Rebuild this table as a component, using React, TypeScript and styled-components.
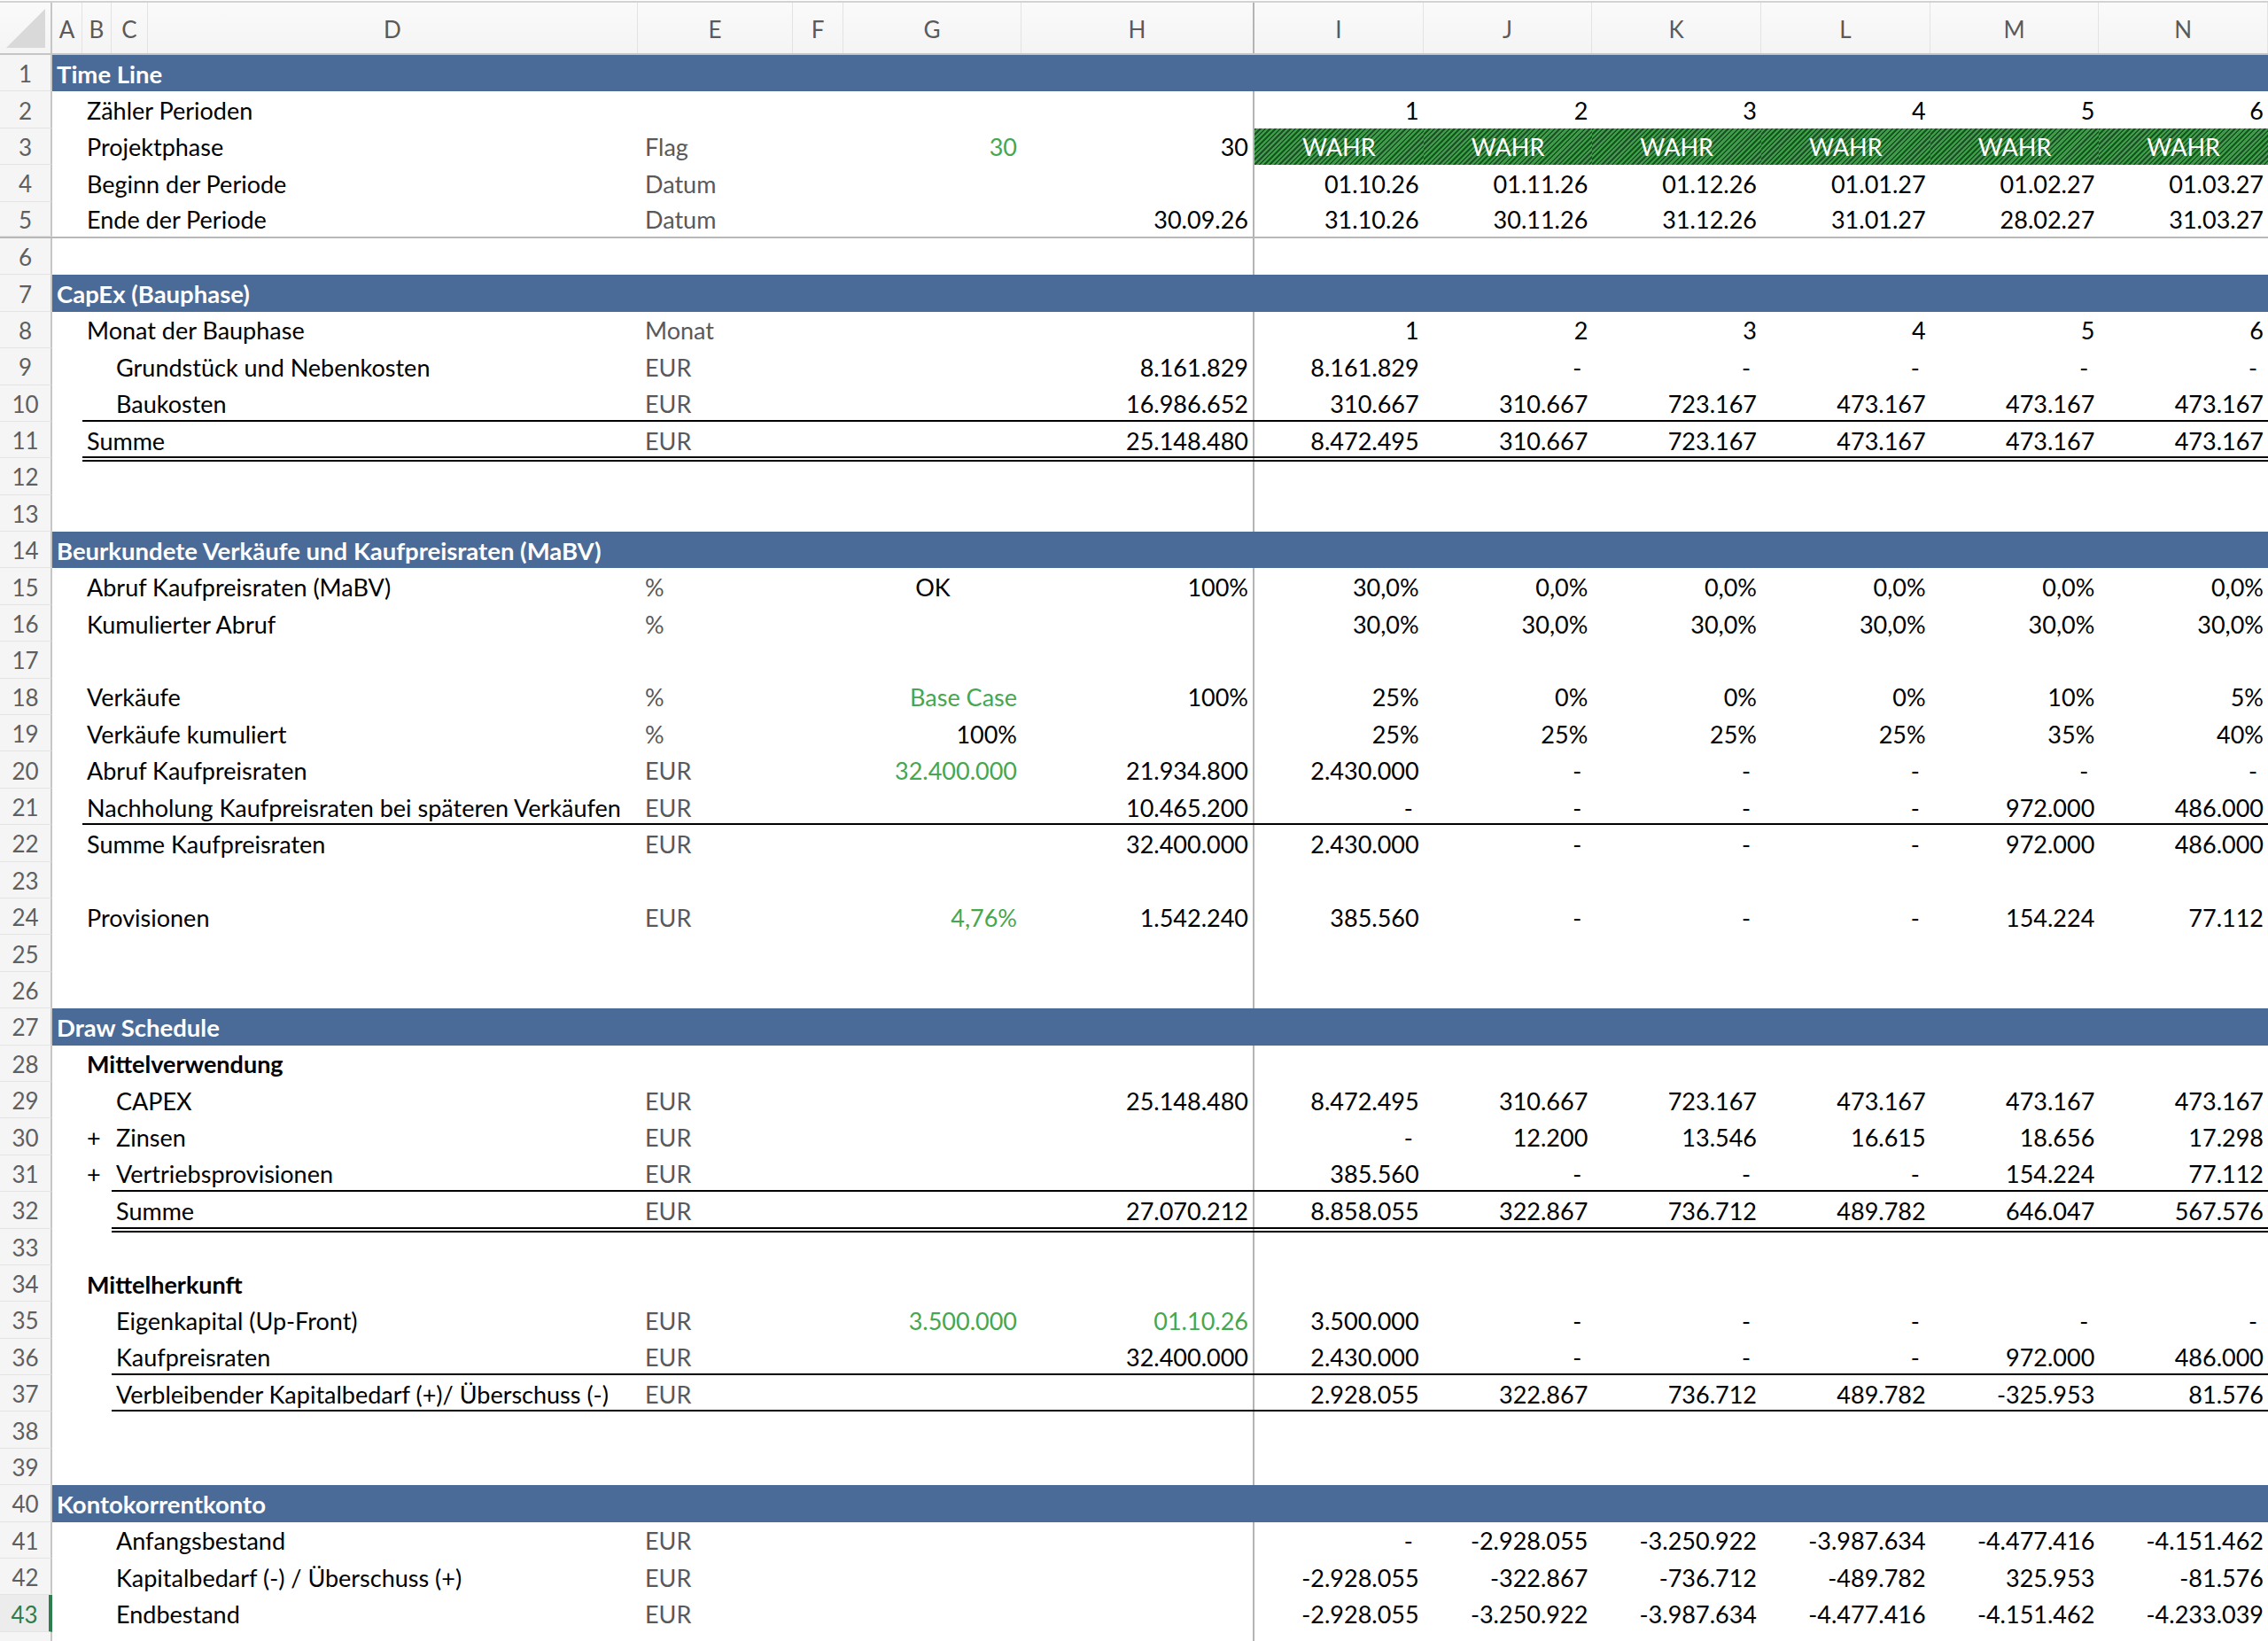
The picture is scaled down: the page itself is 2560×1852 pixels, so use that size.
import React from "react";
import styled, { createGlobalStyle, css } from "styled-components";

const GlobalStyle = createGlobalStyle`
  html, body {
    margin: 0;
    padding: 0;
    background: #ffffff;
  }
  body {
    font-family: Lato, "Liberation Sans", sans-serif;
    overflow: hidden;
  }
`;

const LETTERS = ["A", "B", "C", "D", "E", "F", "G", "H", "I", "J", "K", "L", "M", "N"];
const GRID = "59px 34px 33px 41px 553px 175px 57px 201px 263px repeat(6, 1fr)";
const ROW_H = 41.4;
const col = (letter: string) => LETTERS.indexOf(letter) + 2;

const Sheet = styled.div`
  width: 2560px;
  height: 1852px;
  overflow: hidden;
  display: flex;
  flex-direction: column;
  padding-top: 1px;
  box-sizing: border-box;
  font-size: 27px;
`;

const HeaderRow = styled.div`
  display: grid;
  grid-template-columns: ${GRID};
  height: 61px;
  flex: none;
  box-sizing: border-box;
  border-top: 2px solid #d2d2d2;
  border-bottom: 2px solid #c6c6c6;
  background: linear-gradient(#fafafa, #f4f4f4);
  font-size: 26px;
`;

const Corner = styled.div`
  display: flex;
  align-items: flex-end;
  justify-content: flex-end;
  padding: 0 6px 6px 0;
  border-right: 2px solid #c6c6c6;
`;

const ColLabel = styled.div<{ $freeze?: boolean }>`
  display: flex;
  align-items: center;
  justify-content: center;
  color: #5a5a5a;
  border-right: ${(p) => (p.$freeze ? "2px solid #b4b4b4" : "1.5px solid #e3e3e3")};
  padding-top: 2px;
`;

const Row = styled.div<{ $freeze?: boolean }>`
  display: grid;
  grid-template-columns: ${GRID};
  height: ${ROW_H}px;
  flex: none;
  box-sizing: border-box;
  ${(p) =>
    p.$freeze &&
    css`
      border-bottom: 2px solid #b8b8b8;
    `}
`;

const RowNum = styled.div<{ $active?: boolean }>`
  grid-row: 1;
  grid-column: 1;
  display: flex;
  align-items: center;
  justify-content: center;
  padding-top: 2px;
  font-size: 26px;
  background: ${(p) => (p.$active ? "#ececec" : "#f5f5f5")};
  color: ${(p) => (p.$active ? "#2e7d4c" : "#5f5f5f")};
  border-bottom: 1.5px solid #e4e4e4;
  border-right: ${(p) => (p.$active ? "4px solid #2e7d4c" : "2px solid #c6c6c6")};
  box-sizing: border-box;
`;

type Tone = "ink" | "unit" | "input";
const toneColor: Record<Tone, string> = {
  ink: "#000000",
  unit: "#595959",
  input: "#45a74f",
};

const Cell = styled.div<{
  $col: number;
  $end?: number;
  $align?: "left" | "right" | "center";
  $tone?: Tone;
  $bold?: boolean;
  $dash?: boolean;
  $freeze?: boolean;
}>`
  grid-row: 1;
  grid-column: ${(p) => p.$col} / ${(p) => p.$end ?? p.$col + 1};
  display: flex;
  align-items: center;
  justify-content: ${(p) =>
    p.$align === "right" ? "flex-end" : p.$align === "center" ? "center" : "flex-start"};
  padding: 1px ${(p) => (p.$dash ? 12 : 5)}px 0 ${(p) => (p.$align === "left" || !p.$align ? 5 : 6)}px;
  white-space: nowrap;
  min-width: 0;
  box-sizing: border-box;
  color: ${(p) => toneColor[p.$tone ?? "ink"]};
  font-weight: ${(p) => (p.$bold ? 700 : 400)};
  ${(p) =>
    p.$freeze &&
    css`
      border-right: 2px solid #b4b4b4;
    `}
`;

const Band = styled.div`
  grid-row: 1;
  grid-column: 2 / -1;
  display: flex;
  align-items: center;
  padding: 1px 0 0 5px;
  background: #4a6b98;
  color: #ffffff;
  font-weight: 700;
  font-size: 27.5px;
  white-space: nowrap;
`;

const FlagCell = styled.div<{ $col: number }>`
  grid-row: 1;
  grid-column: ${(p) => p.$col};
  display: flex;
  align-items: center;
  justify-content: center;
  padding-top: 1px;
  color: #ffffff;
  background: repeating-linear-gradient(
    135deg,
    #1b5424 0px,
    #1b5424 1.8px,
    #3f9d49 1.8px,
    #3f9d49 4px
  );
`;

const Rule = styled.div<{ $from: number; $kind: "thin" | "double" }>`
  grid-row: 1;
  grid-column: ${(p) => p.$from} / -1;
  align-self: end;
  height: 0;
  border-bottom: ${(p) => (p.$kind === "double" ? "6px double #000" : "2px solid #000")};
  margin-bottom: ${(p) => (p.$kind === "double" ? "-4px" : "0")};
  position: relative;
  z-index: 1;
`;

type Val = { text: string; input?: boolean; center?: boolean };

type RowDef = {
  section?: string;
  label?: string;
  at?: "B" | "C";
  plus?: boolean;
  bold?: boolean;
  unit?: string;
  g?: Val;
  h?: Val;
  vals?: string[];
  flags?: boolean;
  line?: { from: "B" | "C"; kind: "thin" | "double" };
  freeze?: boolean;
};

const dash = ["-", "-", "-", "-", "-"];

const rows: RowDef[] = [
  { section: "Time Line" },
  { label: "Zähler Perioden", at: "B", vals: ["1", "2", "3", "4", "5", "6"] },
  { label: "Projektphase", at: "B", unit: "Flag", g: { text: "30", input: true }, h: { text: "30" }, flags: true },
  {
    label: "Beginn der Periode",
    at: "B",
    unit: "Datum",
    vals: ["01.10.26", "01.11.26", "01.12.26", "01.01.27", "01.02.27", "01.03.27"],
  },
  {
    label: "Ende der Periode",
    at: "B",
    unit: "Datum",
    h: { text: "30.09.26" },
    vals: ["31.10.26", "30.11.26", "31.12.26", "31.01.27", "28.02.27", "31.03.27"],
    freeze: true,
  },
  {},
  { section: "CapEx (Bauphase)" },
  { label: "Monat der Bauphase", at: "B", unit: "Monat", vals: ["1", "2", "3", "4", "5", "6"] },
  { label: "Grundstück und Nebenkosten", at: "C", unit: "EUR", h: { text: "8.161.829" }, vals: ["8.161.829", ...dash] },
  {
    label: "Baukosten",
    at: "C",
    unit: "EUR",
    h: { text: "16.986.652" },
    vals: ["310.667", "310.667", "723.167", "473.167", "473.167", "473.167"],
    line: { from: "B", kind: "thin" },
  },
  {
    label: "Summe",
    at: "B",
    unit: "EUR",
    h: { text: "25.148.480" },
    vals: ["8.472.495", "310.667", "723.167", "473.167", "473.167", "473.167"],
    line: { from: "B", kind: "double" },
  },
  {},
  {},
  { section: "Beurkundete Verkäufe und Kaufpreisraten (MaBV)" },
  {
    label: "Abruf Kaufpreisraten (MaBV)",
    at: "B",
    unit: "%",
    g: { text: "OK", center: true },
    h: { text: "100%" },
    vals: ["30,0%", "0,0%", "0,0%", "0,0%", "0,0%", "0,0%"],
  },
  { label: "Kumulierter Abruf", at: "B", unit: "%", vals: ["30,0%", "30,0%", "30,0%", "30,0%", "30,0%", "30,0%"] },
  {},
  {
    label: "Verkäufe",
    at: "B",
    unit: "%",
    g: { text: "Base Case", input: true },
    h: { text: "100%" },
    vals: ["25%", "0%", "0%", "0%", "10%", "5%"],
  },
  {
    label: "Verkäufe kumuliert",
    at: "B",
    unit: "%",
    g: { text: "100%" },
    vals: ["25%", "25%", "25%", "25%", "35%", "40%"],
  },
  {
    label: "Abruf Kaufpreisraten",
    at: "B",
    unit: "EUR",
    g: { text: "32.400.000", input: true },
    h: { text: "21.934.800" },
    vals: ["2.430.000", ...dash],
  },
  {
    label: "Nachholung Kaufpreisraten bei späteren Verkäufen",
    at: "B",
    unit: "EUR",
    h: { text: "10.465.200" },
    vals: ["-", "-", "-", "-", "972.000", "486.000"],
    line: { from: "B", kind: "thin" },
  },
  {
    label: "Summe Kaufpreisraten",
    at: "B",
    unit: "EUR",
    h: { text: "32.400.000" },
    vals: ["2.430.000", "-", "-", "-", "972.000", "486.000"],
  },
  {},
  {
    label: "Provisionen",
    at: "B",
    unit: "EUR",
    g: { text: "4,76%", input: true },
    h: { text: "1.542.240" },
    vals: ["385.560", "-", "-", "-", "154.224", "77.112"],
  },
  {},
  {},
  { section: "Draw Schedule" },
  { label: "Mittelverwendung", at: "B", bold: true },
  {
    label: "CAPEX",
    at: "C",
    unit: "EUR",
    h: { text: "25.148.480" },
    vals: ["8.472.495", "310.667", "723.167", "473.167", "473.167", "473.167"],
  },
  {
    label: "Zinsen",
    at: "C",
    plus: true,
    unit: "EUR",
    vals: ["-", "12.200", "13.546", "16.615", "18.656", "17.298"],
  },
  {
    label: "Vertriebsprovisionen",
    at: "C",
    plus: true,
    unit: "EUR",
    vals: ["385.560", "-", "-", "-", "154.224", "77.112"],
    line: { from: "C", kind: "thin" },
  },
  {
    label: "Summe",
    at: "C",
    unit: "EUR",
    h: { text: "27.070.212" },
    vals: ["8.858.055", "322.867", "736.712", "489.782", "646.047", "567.576"],
    line: { from: "C", kind: "double" },
  },
  {},
  { label: "Mittelherkunft", at: "B", bold: true },
  {
    label: "Eigenkapital (Up-Front)",
    at: "C",
    unit: "EUR",
    g: { text: "3.500.000", input: true },
    h: { text: "01.10.26", input: true },
    vals: ["3.500.000", ...dash],
  },
  {
    label: "Kaufpreisraten",
    at: "C",
    unit: "EUR",
    h: { text: "32.400.000" },
    vals: ["2.430.000", "-", "-", "-", "972.000", "486.000"],
    line: { from: "C", kind: "thin" },
  },
  {
    label: "Verbleibender Kapitalbedarf (+)/ Überschuss (-)",
    at: "C",
    unit: "EUR",
    vals: ["2.928.055", "322.867", "736.712", "489.782", "-325.953", "81.576"],
    line: { from: "C", kind: "thin" },
  },
  {},
  {},
  { section: "Kontokorrentkonto" },
  {
    label: "Anfangsbestand",
    at: "C",
    unit: "EUR",
    vals: ["-", "-2.928.055", "-3.250.922", "-3.987.634", "-4.477.416", "-4.151.462"],
  },
  {
    label: "Kapitalbedarf (-) / Überschuss (+)",
    at: "C",
    unit: "EUR",
    vals: ["-2.928.055", "-322.867", "-736.712", "-489.782", "325.953", "-81.576"],
  },
  {
    label: "Endbestand",
    at: "C",
    unit: "EUR",
    vals: ["-2.928.055", "-3.250.922", "-3.987.634", "-4.477.416", "-4.151.462", "-4.233.039"],
  },
  {},
];

const ACTIVE_ROW = 43;

const SelectAll = () => (
  <svg width="44" height="44" viewBox="0 0 44 44">
    <polygon points="44,0 44,44 0,44" fill="#d9d9d9" />
  </svg>
);

const SheetRow = ({ n, def }: { n: number; def: RowDef }) => {
  if (def.section) {
    return (
      <Row>
        <RowNum $active={n === ACTIVE_ROW}>{n}</RowNum>
        <Band>{def.section}</Band>
      </Row>
    );
  }
  return (
    <Row $freeze={def.freeze}>
      <RowNum $active={n === ACTIVE_ROW}>{n <= 43 ? n : ""}</RowNum>
      {def.plus && <Cell $col={col("B")}>+</Cell>}
      {def.label && (
        <Cell $col={col(def.at ?? "B")} $end={col("E")} $bold={def.bold}>
          {def.label}
        </Cell>
      )}
      {def.unit && (
        <Cell $col={col("E")} $tone="unit" style={{ paddingLeft: 8 }}>
          {def.unit}
        </Cell>
      )}
      {def.g && (
        <Cell $col={col("G")} $align={def.g.center ? "center" : "right"} $tone={def.g.input ? "input" : "ink"}>
          {def.g.text}
        </Cell>
      )}
      <Cell $col={col("H")} $align="right" $freeze $tone={def.h?.input ? "input" : "ink"}>
        {def.h?.text}
      </Cell>
      {def.flags &&
        LETTERS.slice(8).map((l) => (
          <FlagCell key={l} $col={col(l)}>
            WAHR
          </FlagCell>
        ))}
      {def.vals?.map((v, i) => (
        <Cell key={i} $col={col("I") + i} $align="right" $dash={v === "-"}>
          {v}
        </Cell>
      ))}
      {def.line && <Rule $from={col(def.line.from)} $kind={def.line.kind} />}
    </Row>
  );
};

export default function App() {
  return (
    <>
      <GlobalStyle />
      <Sheet>
        <HeaderRow>
          <Corner>
            <SelectAll />
          </Corner>
          {LETTERS.map((l) => (
            <ColLabel key={l} $freeze={l === "H"}>
              {l}
            </ColLabel>
          ))}
        </HeaderRow>
        {rows.map((def, i) => (
          <SheetRow key={i} n={i + 1} def={def} />
        ))}
      </Sheet>
    </>
  );
}
